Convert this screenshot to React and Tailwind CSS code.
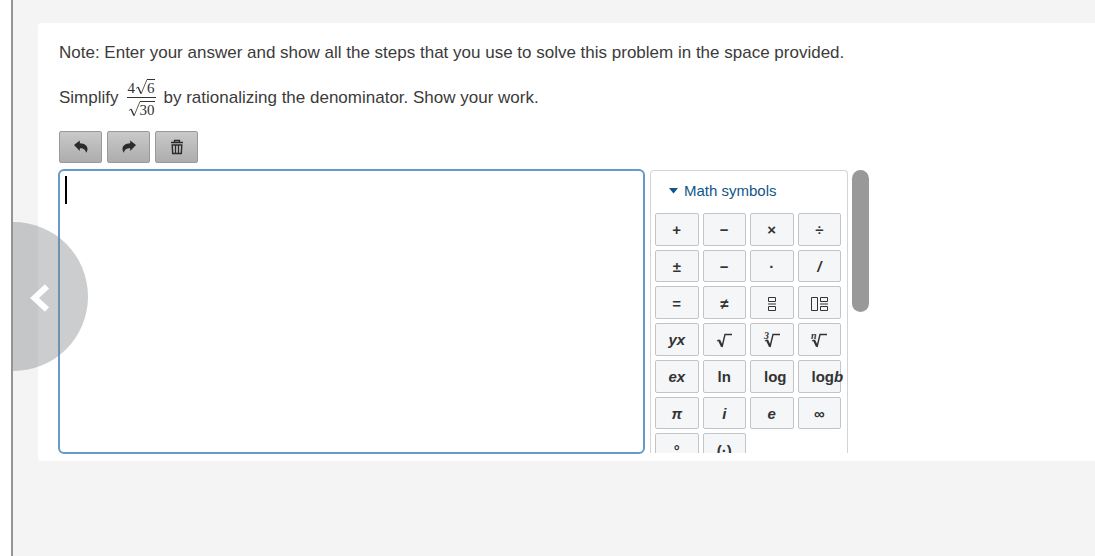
import { useState } from 'react';

const iconClass = 'h-4 w-4 fill-[#2b2b2b]';

const UndoIcon = () => (
    <svg viewBox="0 0 16 16" className={iconClass} aria-hidden="true">
        <path d="M1 6 6.800 1.500v2.800c4.800.1 7.700 2.500 7.700 5.700 0 1.500-.5 2.800-1.500 3.800-.2-2.700-2-4.400-6.200-4.500v2.600z" />
    </svg>
);

const RedoIcon = () => (
    <svg viewBox="0 0 16 16" className={iconClass} aria-hidden="true">
        <path d="M15 6 9.200 1.500v2.800c-4.800.1-7.700 2.500-7.700 5.700 0 1.500.5 2.800 1.500 3.800.2-2.700 2-4.400 6.200-4.500v2.600z" />
    </svg>
);

const TrashIcon = () => (
    <svg viewBox="0 0 16 16" className="h-4 w-4 fill-none stroke-[#2b2b2b]" aria-hidden="true">
        <path d="M2 3.500h12M5.500 3.500V1.500h5v2" strokeWidth="1.300" />
        <path d="M3.200 6h9.600l-.5 8.500H3.700z" strokeWidth="1.400" />
        <path d="M6.500 6v8.500M9.500 6v8.500" strokeWidth="1.200" />
    </svg>
);

const FractionIcon = () => (
    <svg viewBox="0 0 8 16" className="h-4 w-2 fill-none stroke-[#333]" aria-hidden="true">
        <path d="M.5 1.500h7v4h-7zM0 8h8M.5 10.500h7v4h-7z" />
    </svg>
);

const MixedIcon = () => (
    <svg viewBox="0 0 17 16" className="h-4 w-[17px] fill-none stroke-[#333]" aria-hidden="true">
        <path d="M.5 1.500h6v13h-6zM9.500 1.500h7v4h-7zM9 8h8M9.500 10.500h7v4h-7z" />
    </svg>
);

const RootIcon = ({ index }) => (
    <svg viewBox="0 0 18 18" className="h-[18px] w-[18px] fill-none stroke-[#333]" aria-hidden="true">
        <path d="M2 10 4.200 9" strokeWidth="1.200" />
        <path d="M4 9 7 15.500" strokeWidth="2.200" />
        <path d="M7 16 10 3.500h7" strokeWidth="1.400" />
        {index && (
            <text x="1" y="8" className="fill-[#333] stroke-none font-['Liberation_Serif',serif] text-[10px] font-bold italic">
                {index}
            </text>
        )}
    </svg>
);

const symbols = [
    { name: 'plus', face: '+' },
    { name: 'minus', face: '−' },
    { name: 'times', face: '×' },
    { name: 'divided by', face: '÷' },
    { name: 'plus or minus', face: '±' },
    { name: 'negative', face: '−' },
    { name: 'dot', face: '·' },
    { name: 'slash', face: <i>/</i> },
    { name: 'equals', face: '=' },
    { name: 'not equal', face: '≠' },
    { name: 'fraction', face: <FractionIcon /> },
    { name: 'mixed number', face: <MixedIcon /> },
    { name: 'power', face: <i>yx</i> },
    { name: 'square root', face: <RootIcon /> },
    { name: 'cube root', face: <RootIcon index="3" /> },
    { name: 'nth root', face: <RootIcon index="n" /> },
    { name: 'e to the x', face: <i>ex</i> },
    { name: 'natural log', face: 'ln' },
    { name: 'log', face: 'log', wide: true },
    { name: 'log base b', face: <>log<i>b</i></>, wide: true },
    { name: 'pi', face: <i>π</i> },
    { name: 'i', face: <i>i</i> },
    { name: 'e', face: <i>e</i> },
    { name: 'infinity', face: '∞' },
    { name: 'degree', face: '°' },
    { name: 'parentheses', face: '(·)' },
];

const Radical = ({ children }) => (
    <span className="flex h-4">
        <svg viewBox="0 0 12 16" className="h-4 w-3 fill-none stroke-[#333]" aria-hidden="true">
            <path d="M1 9.500 3 8" strokeWidth=".8" />
            <path d="M3 8 6 14.500" strokeWidth="1.400" />
            <path d="M6 15 12 .5" strokeWidth=".8" />
        </svg>
        <span className="border-t border-[#333]">{children}</span>
    </span>
);

const ToolButton = ({ label, onClick, children }) => (
    <button
        type="button"
        aria-label={label}
        onClick={onClick}
        className="flex h-8 w-[43px] items-center justify-center rounded-xs border border-[#999] bg-linear-to-b from-[#c9c9c9] to-[#adadad]"
    >
        {children}
    </button>
);

const App = () => {
    const [answer, setAnswer] = useState('');
    const [history, setHistory] = useState([]);
    const [future, setFuture] = useState([]);
    const [open, setOpen] = useState(true);

    const change = (value) => {
        setHistory([...history, answer]);
        setFuture([]);
        setAnswer(value);
    };

    const undo = () => {
        if (!history.length) return;
        setFuture([answer, ...future]);
        setAnswer(history[history.length - 1]);
        setHistory(history.slice(0, -1));
    };

    const redo = () => {
        if (!future.length) return;
        setHistory([...history, answer]);
        setAnswer(future[0]);
        setFuture(future.slice(1));
    };

    return (
        <div className="min-h-screen bg-white pl-[11px] font-['Liberation_Sans',Arial,sans-serif] text-[#3b3b3b]">
            <div className="relative min-h-screen border-l-2 border-[#949494] bg-[#f4f4f4] pt-[23px] pl-[25px]">
                <main className="rounded-l-sm bg-white pt-[18px] pb-[7px] pl-5">
                    <p className="pl-px text-[17px] leading-6">
                        Note: Enter your answer and show all the steps that you use to solve this problem in the space provided.
                    </p>
                    <p className="mt-3 flex items-center pl-px text-[17px] leading-6">
                        Simplify
                        <span className="mx-2 flex flex-col items-center font-['Liberation_Serif',serif] text-[15px] leading-4 text-[#333]">
                            <span className="flex h-[21px] items-center border-b border-[#333] px-px">
                                <span className="pt-px">4</span>
                                <Radical>6</Radical>
                            </span>
                            <span className="flex h-[21px] items-center">
                                <Radical>30</Radical>
                            </span>
                        </span>
                        by rationalizing the denominator. Show your work.
                    </p>

                    <div className="flex gap-[5px] pt-3 pl-px">
                        <ToolButton label="Undo" onClick={undo}><UndoIcon /></ToolButton>
                        <ToolButton label="Redo" onClick={redo}><RedoIcon /></ToolButton>
                        <ToolButton label="Clear" onClick={() => change('')}><TrashIcon /></ToolButton>
                    </div>

                    <div className="mt-1.5 flex h-[285px] items-start">
                        <div className="relative h-full w-[587px] shrink-0">
                            <textarea
                                aria-label="Your answer"
                                value={answer}
                                onChange={(e) => change(e.target.value)}
                                className="block h-full w-full resize-none rounded-md border-2 border-[#6799cc] bg-white p-2 text-[17px] outline-none"
                            />
                            {!answer && <span className="pointer-events-none absolute top-[7px] left-[7px] h-7 w-0.5 bg-black" />}
                        </div>

                        <section className="mt-px ml-[5px] h-[283px] w-[198px] shrink-0 overflow-hidden rounded-t-sm border border-b-0 border-[#d4d4d8] px-1">
                            <button
                                type="button"
                                aria-expanded={open}
                                onClick={() => setOpen(!open)}
                                className="flex h-[42px] w-full items-center gap-1.5 pb-0.5 pl-3.5 text-[15px] text-[#0f5689]"
                            >
                                <svg viewBox="0 0 9 6" className="h-1.5 w-[9px] fill-current" aria-hidden="true">
                                    <path d="M0 0h9L4.500 5.500z" />
                                </svg>
                                Math symbols
                            </button>
                            {open && (
                                <div className="mr-0.5 grid h-[253px] grid-cols-4 grid-rows-7 gap-1">
                                    {symbols.map((symbol) => (
                                        <button
                                            key={symbol.name}
                                            type="button"
                                            aria-label={symbol.name}
                                            onClick={() => typeof symbol.face === 'string' && change(answer + symbol.face)}
                                            className={`flex min-w-0 items-center rounded-xs border border-[#c2c4c8] bg-[#f5f6f8] pt-0.5 text-[15px] leading-5 font-bold text-[#333] ${symbol.wide ? 'justify-start pl-[13px]' : 'justify-center'}`}
                                        >
                                            {symbol.face}
                                        </button>
                                    ))}
                                </div>
                            )}
                        </section>

                        <div className="mt-px ml-1 h-[142px] w-[17px] shrink-0 rounded-full bg-[#999]" />
                    </div>
                </main>

                <button
                    type="button"
                    aria-label="Previous"
                    className="absolute top-[222px] left-0 flex h-[149px] w-[75px] items-center rounded-r-full bg-[#7d8285]/40 pl-4"
                >
                    <svg viewBox="0 0 22 34" className="h-[34px] w-[22px] fill-none stroke-white" aria-hidden="true">
                        <path d="M18 6.500 5.500 18 18 29.500" strokeWidth="6" />
                    </svg>
                </button>
            </div>
        </div>
    );
};

export default App;
